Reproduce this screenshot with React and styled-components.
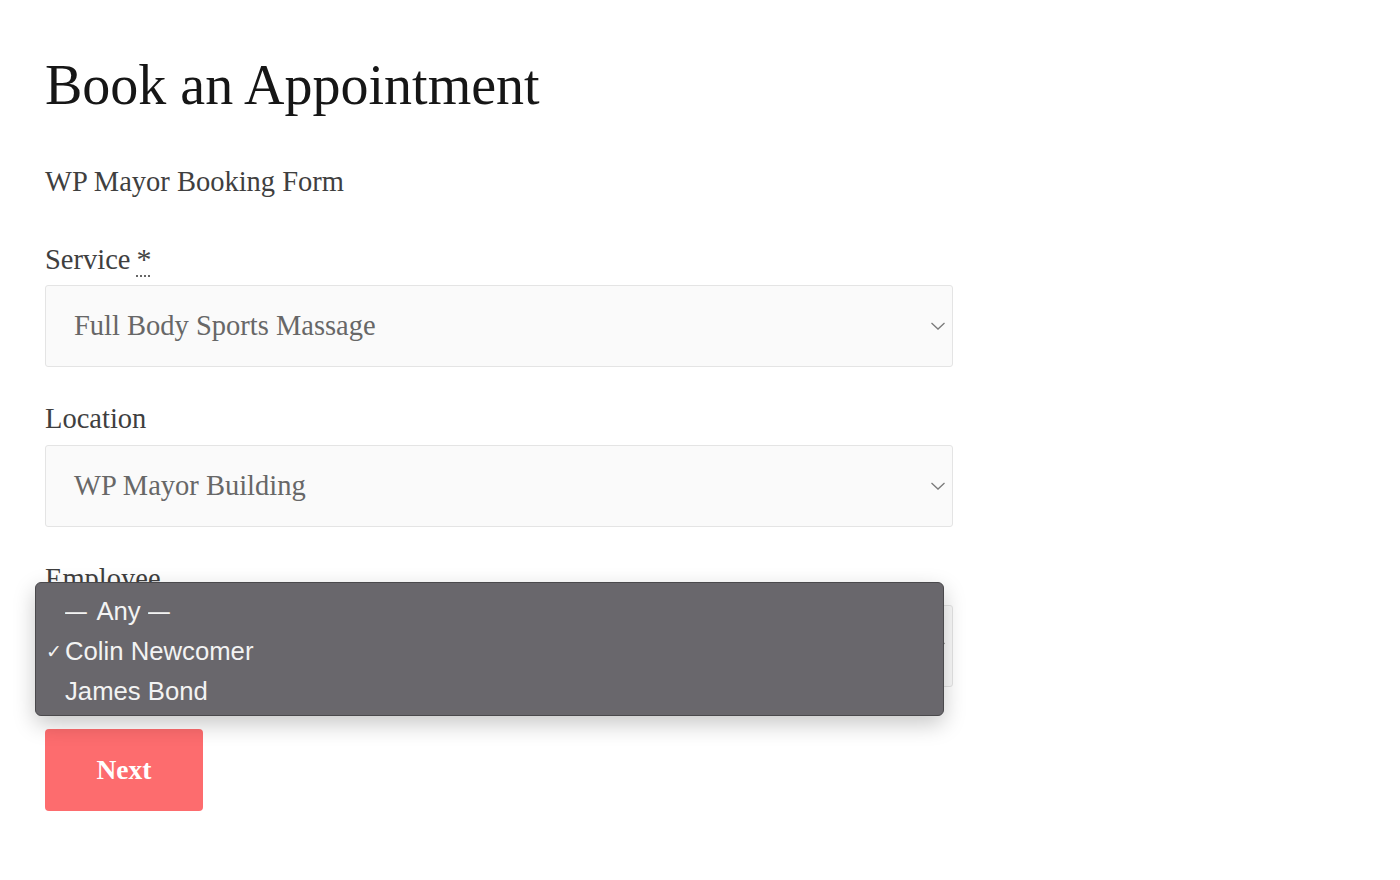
import React from "react";
import styled, { createGlobalStyle } from "styled-components";

const Global = createGlobalStyle`
  html, body { margin: 0; padding: 0; background: #ffffff; }
  body { font-family: "Liberation Serif", "Times New Roman", serif; }
  * { box-sizing: border-box; }
`;

const Page = styled.main`
  padding: 52px 0 0 45px;
  width: 953px;
`;

const Title = styled.h1`
  margin: 0;
  font-weight: 400;
  font-size: 56px;
  line-height: 67px;
  color: #161616;
`;

const Subtitle = styled.p`
  margin: 45px 0 0;
  font-size: 28.5px;
  line-height: 36px;
  color: #3f3f3f;
`;

const Form = styled.form`
  display: flex;
  flex-direction: column;
  margin-top: 41px;
`;

const Field = styled.div`
  position: relative;
  display: flex;
  flex-direction: column;
  gap: 8px;
  margin-bottom: ${(p) => p.$mb}px;
`;

const Label = styled.label`
  display: block;
  font-size: 28.5px;
  line-height: 36px;
  height: 36px;
  color: #3f3f3f;
`;

const Req = styled.abbr`
  margin-left: 6px;
  color: #444;
  font-size: 30px;
  text-decoration: underline dotted #666;
  text-decoration-thickness: 2px;
  text-underline-offset: 6px;
  cursor: help;
`;

const Select = styled.div`
  height: 82px;
  border: 1px solid #e4e4e4;
  border-radius: 3px;
  background: #fafafa;
  display: flex;
  align-items: center;
  justify-content: space-between;
  padding: 0 6px 0 28px;
  font-size: 28.5px;
  color: #676767;
`;

const Chevron = () => (
  <svg width="16" height="10" viewBox="0 0 16 10" aria-hidden="true">
    <path d="M1.5 2 L8 8 L14.5 2" fill="none" stroke="#7a7a7a" strokeWidth="1.3" />
  </svg>
);

const Menu = styled.ul`
  position: absolute;
  left: -10px;
  top: 21px;
  width: 909px;
  margin: 0;
  padding: 8px 0 4px;
  list-style: none;
  background: #69676c;
  border: 1px solid #4a494c;
  border-radius: 6px;
  box-shadow: 0 8px 22px rgba(0, 0, 0, 0.22);
  font-family: "Liberation Sans", Arial, sans-serif;
  font-size: 25.7px;
  color: #f3f3f3;
  z-index: 2;
`;

const Item = styled.li`
  position: relative;
  height: 40px;
  line-height: 40px;
  padding-left: 29px;
`;

const Dash = styled.span`
  display: inline-block;
  transform: scaleX(0.85);
  transform-origin: ${(p) => (p.$end ? "right" : "left")};
`;

const Check = styled.span`
  position: absolute;
  left: 10px;
  top: 1px;
  font-size: 19px;
`;

const Button = styled.button`
  align-self: flex-start;
  width: 158px;
  height: 82px;
  border: none;
  border-radius: 4px;
  background: #fd6c6e;
  color: #ffffff;
  font-family: "Liberation Serif", "Times New Roman", serif;
  font-weight: 700;
  font-size: 27.5px;
  cursor: pointer;
`;

export default function App() {
  return (
    <>
      <Global />
      <Page>
        <Title>Book an Appointment</Title>
        <Subtitle>WP Mayor Booking Form</Subtitle>
        <Form onSubmit={(e) => e.preventDefault()}>
          <Field $mb={34}>
            <Label>
              Service<Req title="required">*</Req>
            </Label>
            <Select>
              <span>Full Body Sports Massage</span>
              <Chevron />
            </Select>
          </Field>
          <Field $mb={34}>
            <Label>Location</Label>
            <Select>
              <span>WP Mayor Building</span>
              <Chevron />
            </Select>
          </Field>
          <Field $mb={42}>
            <Label>Employee</Label>
            <Select>
              <span>Colin Newcomer</span>
              <Chevron />
            </Select>
            <Menu>
              <Item>
                <Dash>—</Dash> Any <Dash>—</Dash>
              </Item>
              <Item>
                <Check>✓</Check>Colin Newcomer
              </Item>
              <Item>James Bond</Item>
            </Menu>
          </Field>
          <Button type="submit">Next</Button>
        </Form>
      </Page>
    </>
  );
}
